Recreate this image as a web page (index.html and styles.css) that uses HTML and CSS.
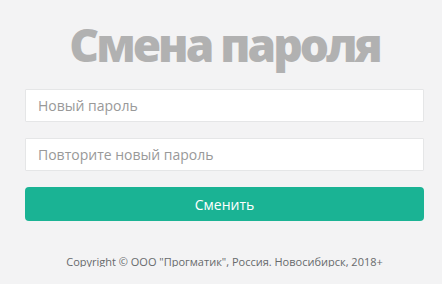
FILE: index.html
```html
<!DOCTYPE html>
<html lang="ru">
<head>
  <meta charset="UTF-8">
  <meta name="viewport" content="width=device-width, initial-scale=1.0">
  <link rel="stylesheet" href="styles.css">
</head>
<body>
  <div class="container">
    <h1 class="logo-name">Смена пароля</h1>

    <form class="form">
      <input type="password" class="form-control" placeholder="Новый пароль">
      <input type="password" class="form-control" placeholder="Повторите новый пароль">
      <button type="button" class="btn-primary">Сменить</button>
    </form>

    <p class="copyright">Copyright © ООО "Прогматик", Россия. Новосибирск, 2018+</p>
  </div>
</body>
</html>
```

FILE: styles.css
```css
:root {
  --bg: #f3f3f4;
  --primary: #1ab394;
  --text: #676a6c;
  --muted: #999999;
  --border: #e5e6e7;
  --title: #b1b1b1;
}

body {
  margin: 0;
  background: var(--bg);
  font-family: 'Open Sans', 'Noto Sans', sans-serif;
  color: var(--text);
}

.container {
  width: 399px;
  margin-left: 25px;
  display: flex;
  flex-direction: column;
  align-items: center;
}

.logo-name {
  margin: 21px 0 0;
  font-size: 46px;
  line-height: 46px;
  font-weight: 800;
  letter-spacing: -3px;
  color: var(--title);
}

.form {
  width: 100%;
  margin-top: 22px;
  display: flex;
  flex-direction: column;
  gap: 16px;
}

.form-control {
  box-sizing: border-box;
  width: 100%;
  height: 33px;
  padding: 6px 12px;
  border: 1px solid var(--border);
  border-radius: 1px;
  background: #fff;
  font-family: inherit;
  font-size: 14px;
  color: var(--text);
  outline: none;
}

.form-control::placeholder {
  color: var(--muted);
}

.btn-primary {
  height: 34px;
  border: none;
  border-radius: 4px;
  background: var(--primary);
  color: #fff;
  font-family: inherit;
  font-size: 14px;
  cursor: pointer;
}

.copyright {
  margin: 35px 0 0;
  font-size: 11px;
  line-height: 11px;
  color: var(--text);
}
```
